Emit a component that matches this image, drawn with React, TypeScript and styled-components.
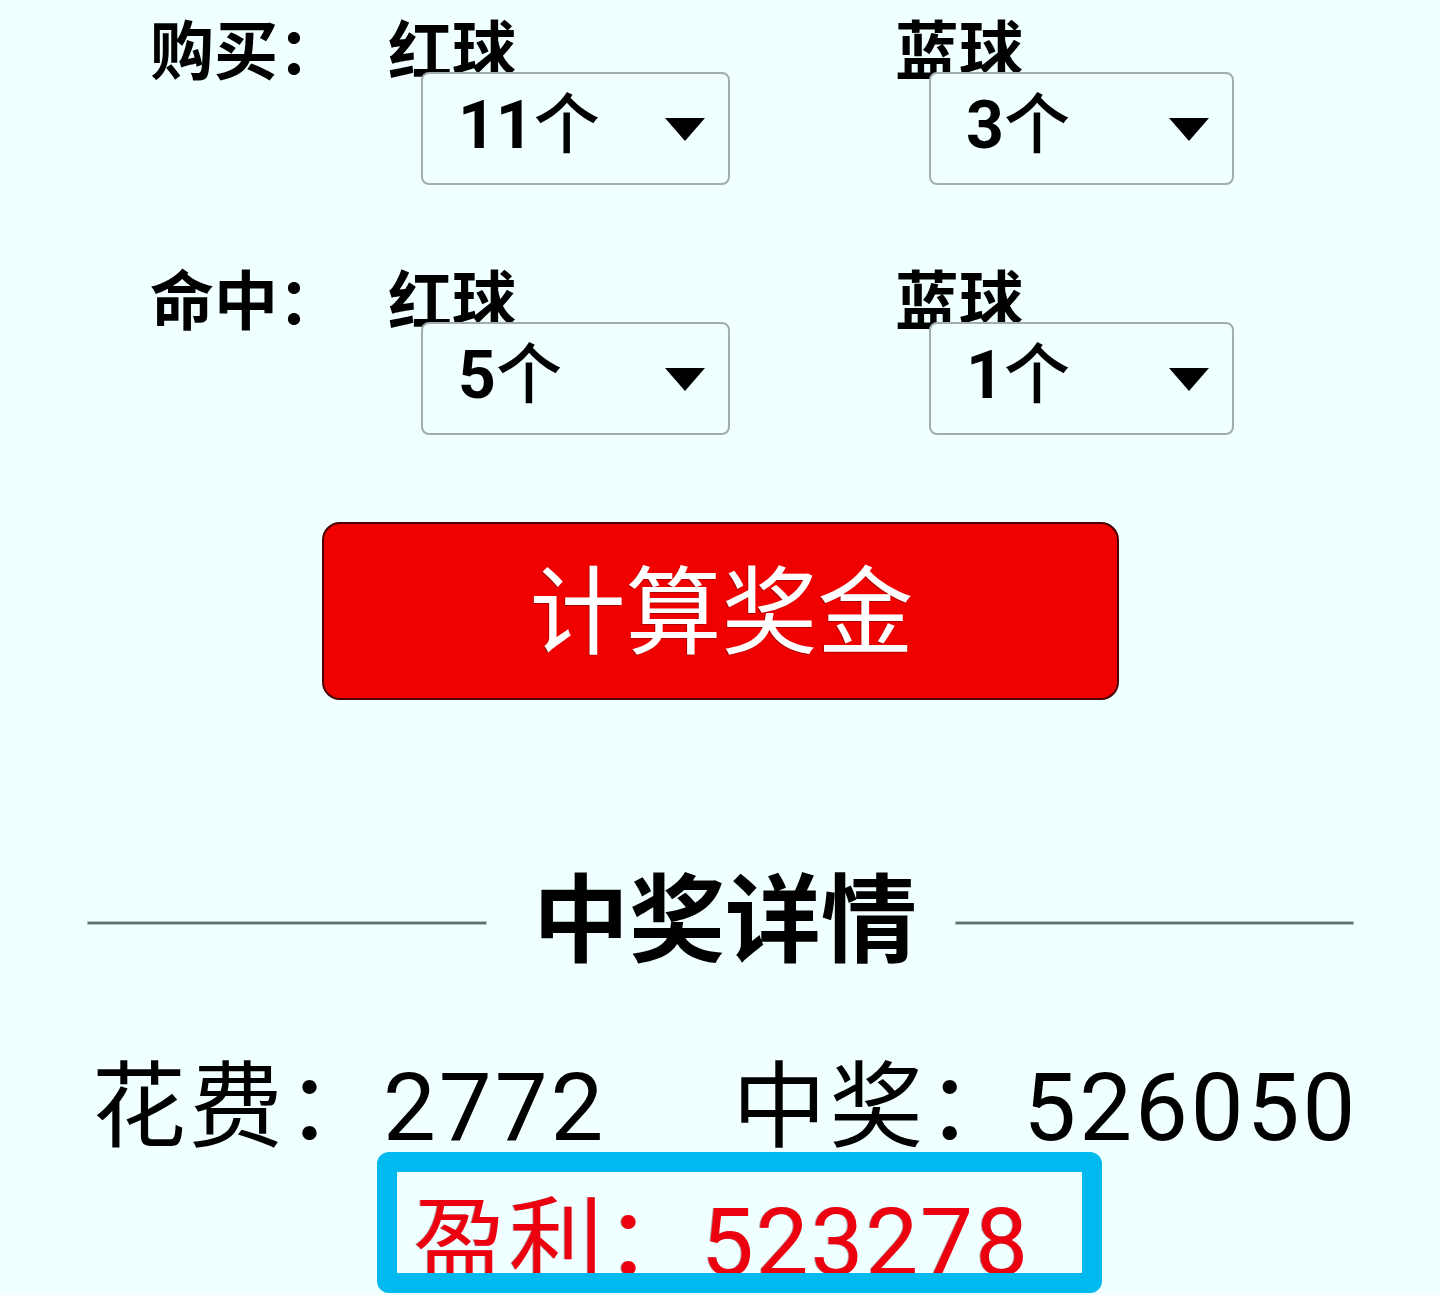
import React from "react";
import styled, { createGlobalStyle } from "styled-components";

const GlobalStyle = createGlobalStyle`
  html, body {
    margin: 0;
    padding: 0;
    background: #f0ffff;
    overflow: hidden;
  }
  body {
    font-family: Roboto, "Noto Sans CJK SC", sans-serif;
    color: #000;
  }
`;

const Page = styled.div`
  width: 1440px;
  height: 1295px;
  background: #f0ffff;
  padding-top: 14px;
  box-sizing: border-box;
  overflow: hidden;
`;

const Row = styled.div<{ $top?: number }>`
  display: flex;
  align-items: flex-start;
  padding-left: 150px;
  margin-top: ${(p) => p.$top ?? 0}px;
`;

const RowLabel = styled.div`
  width: 238px;
  font-family: "Noto Sans CJK SC", sans-serif;
  font-weight: 700;
  font-size: 64px;
  line-height: 64px;
`;

const BallGroup = styled.div<{ $offset?: number }>`
  display: flex;
  flex-direction: column;
  margin-left: ${(p) => p.$offset ?? 0}px;
`;

const BallLabel = styled.div`
  font-family: "Noto Sans CJK SC", sans-serif;
  font-weight: 700;
  font-size: 64px;
  line-height: 64px;
`;

const Select = styled.div<{ $indent: number; $w: number }>`
  position: relative;
  margin-top: -6px;
  margin-left: ${(p) => p.$indent}px;
  width: ${(p) => p.$w}px;
  height: 113px;
  box-sizing: border-box;
  border: 2px solid #a4adad;
  border-radius: 8px;
  background: #f0ffff;
  display: flex;
  align-items: flex-start;
  justify-content: space-between;
  padding: 12px 23px 0 35px;
`;

const SelectValue = styled.div`
  font-family: Roboto, "Noto Sans CJK SC", sans-serif;
  font-weight: 700;
  font-size: 66px;
  line-height: 66px;
`;

const Unit = styled.span`
  font-family: "Noto Sans CJK SC", sans-serif;
  font-weight: 500;
`;

const Caret = styled.svg`
  display: block;
  margin-top: 32px;
`;

const ButtonWrap = styled.div`
  display: flex;
  justify-content: center;
  margin-top: 87px;
  padding-left: 1px;
`;

const CalcButton = styled.button`
  width: 797px;
  height: 178px;
  box-sizing: border-box;
  background: #f10000;
  border: 2px solid #4a0000;
  border-radius: 18px;
  color: #fff;
  font-family: "Noto Sans CJK SC", sans-serif;
  font-weight: 400;
  font-size: 96px;
  line-height: 96px;
  display: flex;
  align-items: center;
  justify-content: center;
  padding: 0 0 12px 2px;
  text-shadow: -1px 1px 0 rgba(60, 0, 0, 0.35);
  cursor: pointer;
`;

const Divider = styled.div`
  display: flex;
  align-items: flex-start;
  padding-left: 88px;
  margin-top: 165px;
`;

const Rule = styled.div<{ $w: number }>`
  width: ${(p) => p.$w}px;
  height: 2px;
  margin-top: 57px;
  background: #5d6e6e;
  box-shadow: 0 0 0 1px #b4c4c4;
`;

const Title = styled.div`
  font-family: "Noto Sans CJK SC", sans-serif;
  font-weight: 700;
  font-size: 96px;
  line-height: 96px;
  margin: 0 39px 0 47px;
`;

const Summary = styled.div`
  display: flex;
  padding-left: 92px;
  margin-top: 100px;
  gap: 126px;
`;

const Stat = styled.div`
  font-family: Roboto, "Noto Sans CJK SC", sans-serif;
  font-weight: 400;
  font-size: 94px;
  line-height: 94px;
  letter-spacing: 3px;
  white-space: nowrap;
`;

const ProfitBox = styled.div`
  margin-top: -3px;
  margin-left: 377px;
  width: 725px;
  height: 141px;
  box-sizing: border-box;
  border: 20px solid #00b9ee;
  border-radius: 12px;
  background: #f0ffff;
  overflow: hidden;
`;

const ProfitText = styled.div`
  font-family: Roboto, "Noto Sans CJK SC", sans-serif;
  font-weight: 400;
  font-size: 94px;
  line-height: 94px;
  letter-spacing: 2px;
  color: #ec0010;
  padding: 24px 0 0 16px;
  white-space: nowrap;
  text-shadow: -1px 0 0 rgba(90, 0, 0, 0.4);
`;

const DropCaret = () => (
  <Caret width="40" height="23" viewBox="0 0 40 23">
    <polygon points="0,0 40,0 20,23" fill="#000" />
  </Caret>
);

type Pick = { value: string };

const Dropdown = ({ value, indent, w }: Pick & { indent: number; w: number }) => (
  <Select $indent={indent} $w={w}>
    <SelectValue>
      {value}
      <Unit>个</Unit>
    </SelectValue>
    <DropCaret />
  </Select>
);

const BallRow = ({
  label,
  red,
  blue,
  top,
}: {
  label: string;
  red: string;
  blue: string;
  top?: number;
}) => (
  <Row $top={top}>
    <RowLabel>{label}</RowLabel>
    <BallGroup>
      <BallLabel>红球</BallLabel>
      <Dropdown value={red} indent={33} w={309} />
    </BallGroup>
    <BallGroup $offset={165}>
      <BallLabel>蓝球</BallLabel>
      <Dropdown value={blue} indent={34} w={305} />
    </BallGroup>
  </Row>
);

export default function App() {
  return (
    <>
      <GlobalStyle />
      <Page>
        <BallRow label="购买：" red="11" blue="3" />
        <BallRow label="命中：" red="5" blue="1" top={79} />
        <ButtonWrap>
          <CalcButton>计算奖金</CalcButton>
        </ButtonWrap>
        <Divider>
          <Rule $w={398} />
          <Title>中奖详情</Title>
          <Rule $w={397} />
        </Divider>
        <Summary>
          <Stat>花费：2772</Stat>
          <Stat>中奖：526050</Stat>
        </Summary>
        <ProfitBox>
          <ProfitText>盈利：523278</ProfitText>
        </ProfitBox>
      </Page>
    </>
  );
}
